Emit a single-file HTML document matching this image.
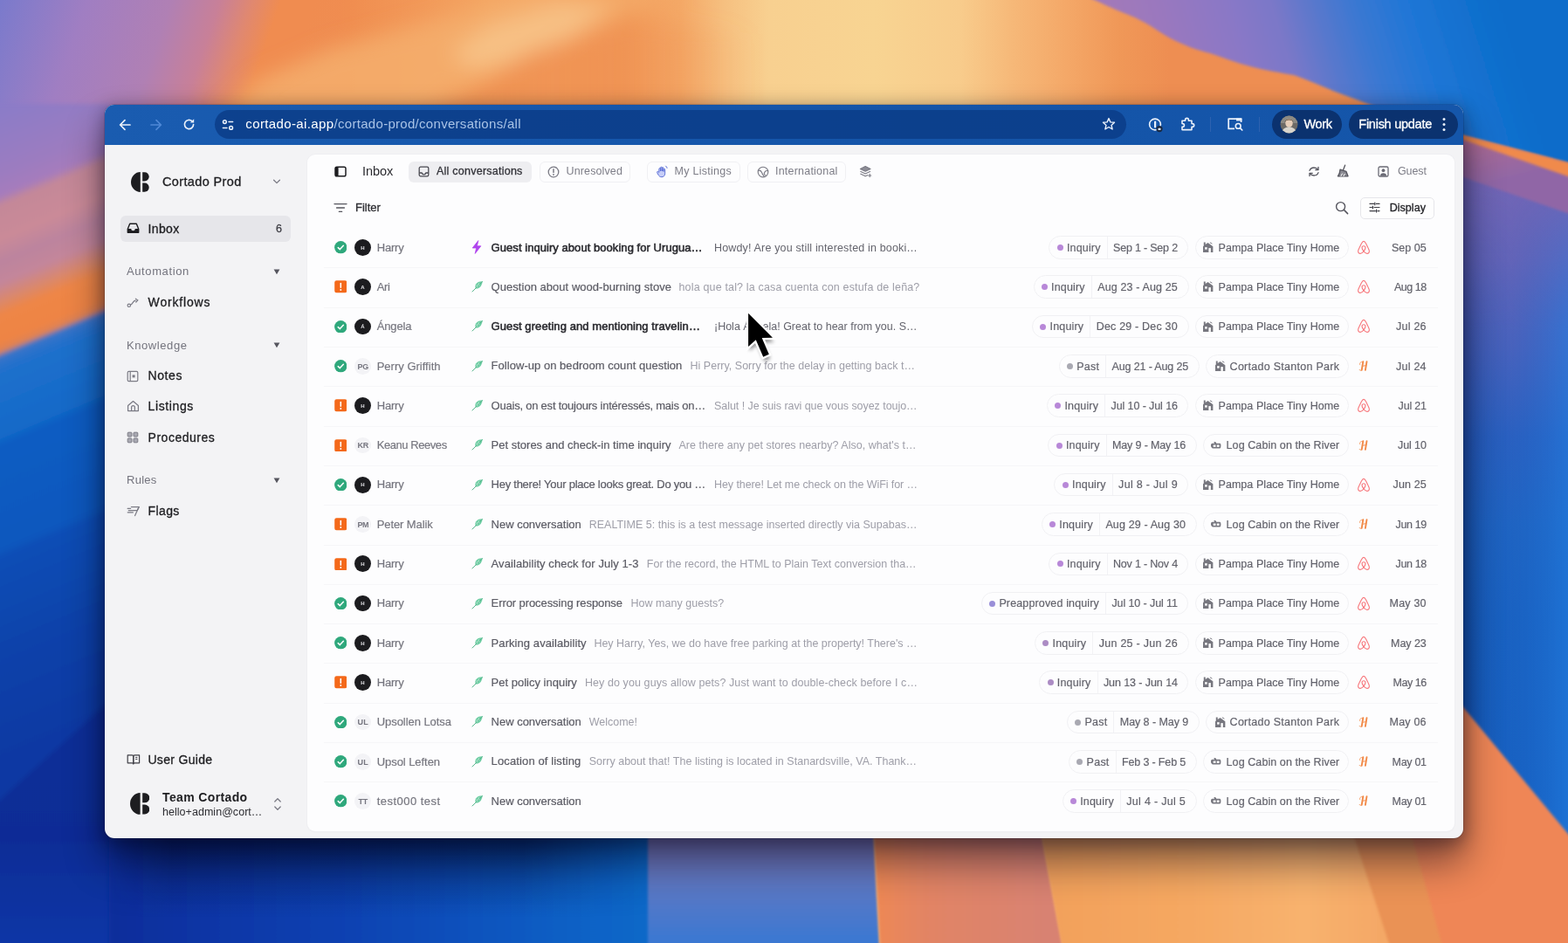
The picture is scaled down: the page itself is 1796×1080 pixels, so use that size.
<!DOCTYPE html>
<html lang="en"><head><meta charset="utf-8"><title>Cortado Inbox</title>
<style>
*{box-sizing:border-box;margin:0;padding:0}
html,body{width:1796px;height:1080px;overflow:hidden;background:#0a5cc0}
body{position:relative;font-family:"Liberation Sans",sans-serif;color:#18181b}
#bg{position:absolute;left:0;top:0}
#win{position:absolute;left:120px;top:120px;width:1556px;height:840px;border-radius:11px;background:#f3f3f5;box-shadow:0 26px 44px 2px rgba(0,0,20,.48),0 4px 18px 2px rgba(0,0,24,.30),0 0 0 1px rgba(0,0,30,.12)}
#tb{position:absolute;left:120px;top:120px;width:1556px;height:46px;border-radius:11px 11px 0 0;background:linear-gradient(90deg,#1a5cb0 0%,#1657ac 30%,#1454a8 60%,#1556aa 100%)}
#main{position:absolute;left:352px;top:176.5px;width:1314px;height:775px;background:#fdfdfe;border-radius:9px;box-shadow:0 0 0 1px #efeff2,0 1px 2px rgba(0,0,0,.04)}
#ui{position:absolute;left:0;top:0;width:1796px;height:1080px;will-change:transform}
.t{position:absolute;white-space:pre;line-height:20px;height:20px}
.m{-webkit-text-stroke:.3px currentColor}
.m2{-webkit-text-stroke:.18px currentColor}
.sb{-webkit-text-stroke:.55px currentColor}

</style></head>
<body>
<svg id="bg" width="1796" height="1080" viewBox="0 0 1796 1080">
<defs>
<linearGradient id="gTop" x1="0" y1="0" x2="1796" y2="0" gradientUnits="userSpaceOnUse">
<stop offset="0" stop-color="#7d7ccc"/>
<stop offset="0.033" stop-color="#8e7ec6"/>
<stop offset="0.067" stop-color="#a480be"/>
<stop offset="0.1" stop-color="#b880aa"/>
<stop offset="0.128" stop-color="#cc8490"/>
<stop offset="0.15" stop-color="#e2886c"/>
<stop offset="0.178" stop-color="#ef8b52"/>
<stop offset="0.223" stop-color="#f08e50"/>
<stop offset="0.267" stop-color="#f29858"/>
<stop offset="0.312" stop-color="#f4a562"/>
<stop offset="0.356" stop-color="#f5a462"/>
<stop offset="0.40" stop-color="#f29c5a"/>
<stop offset="0.434" stop-color="#f4a866"/>
<stop offset="0.462" stop-color="#f6c080"/>
<stop offset="0.49" stop-color="#f8d090"/>
<stop offset="0.557" stop-color="#f8d492"/>
<stop offset="0.612" stop-color="#f8cc8c"/>
<stop offset="0.646" stop-color="#f6b878"/>
<stop offset="0.68" stop-color="#f4a868"/>
<stop offset="0.713" stop-color="#f09858"/>
<stop offset="0.746" stop-color="#ee8e52"/>
<stop offset="1" stop-color="#ee8e52"/>
</linearGradient>
<linearGradient id="gSky" x1="1250" y1="80" x2="1700" y2="-60" gradientUnits="userSpaceOnUse">
<stop offset="0" stop-color="#a87ab4"/>
<stop offset="0.2" stop-color="#9a78be"/>
<stop offset="0.36" stop-color="#8a78c6"/>
<stop offset="0.47" stop-color="#7a78c8"/>
<stop offset="0.56" stop-color="#5a78cc"/>
<stop offset="0.66" stop-color="#3a78d2"/>
<stop offset="0.78" stop-color="#2076d6"/>
<stop offset="0.95" stop-color="#0e6ecc"/>
<stop offset="1" stop-color="#0a6cca"/>
</linearGradient>
<linearGradient id="gRight" x1="0" y1="150" x2="0" y2="1080" gradientUnits="userSpaceOnUse">
<stop offset="0" stop-color="#7c68b4"/>
<stop offset="0.055" stop-color="#7466b6"/>
<stop offset="0.16" stop-color="#6664b8"/>
<stop offset="0.27" stop-color="#4c62bc"/>
<stop offset="0.376" stop-color="#2c60c0"/>
<stop offset="0.484" stop-color="#2064c2"/>
<stop offset="0.6" stop-color="#1a62c2"/>
<stop offset="1" stop-color="#1660c2"/>
</linearGradient>
<linearGradient id="gRightH" x1="1676" y1="0" x2="1800" y2="0" gradientUnits="userSpaceOnUse">
<stop offset="0" stop-color="#0a3c98" stop-opacity=".22"/>
<stop offset="0.45" stop-color="#1a66c8" stop-opacity=".1"/>
<stop offset="1" stop-color="#2280e4" stop-opacity=".6"/>
</linearGradient>
<!-- diagonal band gradient for left strip: t=(y+0.42x)/1000 -->
<linearGradient id="gLeft" x1="0" y1="0" x2="357" y2="850" gradientUnits="userSpaceOnUse">
<stop offset="0" stop-color="#807ccc"/>
<stop offset="0.12" stop-color="#8a7cc8"/>
<stop offset="0.2" stop-color="#9c7cc0"/>
<stop offset="0.224" stop-color="#a67cbc"/>
<stop offset="0.236" stop-color="#c48898"/>
<stop offset="0.275" stop-color="#ca8a98"/>
<stop offset="0.30" stop-color="#bc849e"/>
<stop offset="0.325" stop-color="#c4869a"/>
<stop offset="0.347" stop-color="#dc8868"/>
<stop offset="0.362" stop-color="#ee8646"/>
<stop offset="0.392" stop-color="#ee8444"/>
<stop offset="0.403" stop-color="#dc8258"/>
<stop offset="0.409" stop-color="#3a74c8"/>
<stop offset="0.425" stop-color="#2070cc"/>
<stop offset="0.47" stop-color="#186cca"/>
<stop offset="0.5" stop-color="#146ac8"/>
<stop offset="0.512" stop-color="#0a5cc2"/>
<stop offset="0.628" stop-color="#0a58be"/>
<stop offset="0.64" stop-color="#0a4eb6"/>
<stop offset="0.75" stop-color="#0a42aa"/>
<stop offset="0.85" stop-color="#0a3aa4"/>
<stop offset="1" stop-color="#0a34a0"/>
</linearGradient>
<linearGradient id="gNavy" x1="0" y1="780" x2="0" y2="1080" gradientUnits="userSpaceOnUse">
<stop offset="0" stop-color="#0a3098"/>
<stop offset="0.6" stop-color="#0a2c96"/>
<stop offset="1" stop-color="#0a36a6"/>
</linearGradient>
<linearGradient id="gBot" x1="120" y1="0" x2="745" y2="0" gradientUnits="userSpaceOnUse">
<stop offset="0" stop-color="#0a2c9a"/>
<stop offset="0.2" stop-color="#0a36a6"/>
<stop offset="0.45" stop-color="#0a42b2"/>
<stop offset="0.7" stop-color="#0a54be"/>
<stop offset="0.88" stop-color="#0a62c6"/>
<stop offset="1" stop-color="#0868c8"/>
</linearGradient>
<linearGradient id="gB2" x1="0" y1="960" x2="0" y2="1080" gradientUnits="userSpaceOnUse">
<stop offset="0" stop-color="#7a76b6"/>
<stop offset="0.45" stop-color="#5c78c4"/>
<stop offset="1" stop-color="#3a78d2"/>
</linearGradient>
<linearGradient id="gB3" x1="1000" y1="0" x2="1200" y2="0" gradientUnits="userSpaceOnUse">
<stop offset="0" stop-color="#ee8854"/>
<stop offset="0.3" stop-color="#e28464"/>
<stop offset="1" stop-color="#d88272"/>
</linearGradient>
<linearGradient id="gB4" x1="1190" y1="0" x2="1580" y2="0" gradientUnits="userSpaceOnUse">
<stop offset="0" stop-color="#f2a05a"/>
<stop offset="0.45" stop-color="#f5a862"/>
<stop offset="0.78" stop-color="#f8b26e"/>
<stop offset="1" stop-color="#f4a866"/>
</linearGradient>
<linearGradient id="gDk" x1="505" y1="0" x2="860" y2="0" gradientUnits="userSpaceOnUse">
<stop offset="0" stop-color="#ee8c4e" stop-opacity=".75"/>
<stop offset="0.55" stop-color="#ee8c4e" stop-opacity=".6"/>
<stop offset="1" stop-color="#f2a060" stop-opacity="0"/>
</linearGradient>
<linearGradient id="gTL" x1="0" y1="0" x2="378" y2="130" gradientUnits="userSpaceOnUse">
<stop offset="0" stop-color="#7a7acc"/>
<stop offset="0.1" stop-color="#8a7cc8"/>
<stop offset="0.2375" stop-color="#a07ec2"/>
<stop offset="0.465" stop-color="#b080b4"/>
<stop offset="0.5975" stop-color="#c88098"/>
<stop offset="0.685" stop-color="#e08870"/>
<stop offset="0.7625" stop-color="#f08c50"/>
<stop offset="0.85" stop-color="#f08c50"/>
<stop offset="1" stop-color="#f08c50" stop-opacity="0"/>
</linearGradient>
<linearGradient id="gMR" x1="0" y1="200" x2="0" y2="380" gradientUnits="userSpaceOnUse"><stop offset="0" stop-color="#000"/><stop offset="1" stop-color="#fff"/></linearGradient>
<mask id="mR" maskUnits="userSpaceOnUse" x="1600" y="150" width="260" height="960"><rect x="1600" y="150" width="260" height="960" fill="url(#gMR)"/></mask>
<linearGradient id="gPink" x1="1676" y1="160" x2="1690" y2="215" gradientUnits="userSpaceOnUse"><stop offset="0" stop-color="#b06c92"/><stop offset="1" stop-color="#9066a6"/></linearGradient>
<linearGradient id="gBotS" x1="0" y1="958" x2="0" y2="1050" gradientUnits="userSpaceOnUse"><stop offset="0" stop-color="#04103c" stop-opacity=".55"/><stop offset="0.4" stop-color="#04103c" stop-opacity=".28"/><stop offset="1" stop-color="#04103c" stop-opacity="0"/></linearGradient>
<linearGradient id="gMBS" x1="120" y1="0" x2="760" y2="0" gradientUnits="userSpaceOnUse"><stop offset="0" stop-color="#000"/><stop offset="0.12" stop-color="#fff"/><stop offset="0.75" stop-color="#fff"/><stop offset="1" stop-color="#000"/></linearGradient>
<mask id="mBS" maskUnits="userSpaceOnUse" x="100" y="940" width="700" height="140"><rect x="100" y="940" width="700" height="140" fill="url(#gMBS)"/></mask>
<filter id="b6" x="-5%" y="-5%" width="110%" height="110%"><feGaussianBlur stdDeviation="2.5"/></filter>
<filter id="b3" x="-5%" y="-5%" width="110%" height="110%"><feGaussianBlur stdDeviation="1.6"/></filter>
<filter id="b12" x="-5%" y="-5%" width="110%" height="110%"><feGaussianBlur stdDeviation="12"/></filter>
</defs>
<rect width="1796" height="1080" fill="url(#gTop)"/>
<rect x="0" y="0" width="520" height="135" fill="url(#gTL)"/>
<!-- diagonal lighter band top-left -->
<g filter="url(#b12)">
<polygon points="250,135 295,92 378,56 462,33 545,11 600,-12 780,-12 700,20 600,56 490,125 480,135" fill="#f5ae6c" opacity=".85"/>
<polygon points="517,60 560,30 640,5 700,10 660,40 590,72 540,80" fill="#f8c48a" opacity=".85"/>
<polygon points="500,135 600,62 720,22 860,40 860,135" fill="url(#gDk)"/>
</g>
<!-- sky above ridge -->
<path d="M1243,-5 C1270,8 1285,14 1300,20 C1320,30 1330,38 1339,43 C1356,52 1370,57 1386,61 C1402,66 1416,72 1432,76 C1450,81 1466,83 1482,86 C1500,92 1516,100 1532,106 C1580,124 1630,142 1676,156 L1830,196 L1830,-5 Z" fill="url(#gSky)" filter="url(#b3)"/>
<rect x="1620" y="-5" width="180" height="200" fill="#0a66c6" opacity=".0"/>
<!-- right strip below ridge -->
<polygon points="1600,131 1676,157 1830,197 1830,1080 1600,1080" fill="url(#gRight)"/>
<rect x="1640" y="180" width="190" height="910" fill="url(#gRightH)" mask="url(#mR)"/>
<polygon points="1600,130 1676,156 1830,196 1830,256 1676,203 1600,177" fill="url(#gPink)" filter="url(#b3)"/>
<polygon points="1600,129 1676,155 1830,195 1830,214 1676,160 1600,135" fill="#f08a4c" filter="url(#b3)"/>
<!-- bottom right orange -->
<polygon points="1600,715 1676,810 1830,996 1830,1090 1400,1090 1400,715" fill="#ef8656" filter="url(#b3)"/>
<!-- left strip -->
<g filter="url(#b6)">
<rect x="-10" y="119" width="136" height="980" fill="url(#gLeft)"/>
<polygon points="-10,925 130,798 300,640 300,1100 -10,1100" fill="url(#gNavy)"/>
</g>
<!-- bottom strip -->
<rect x="125" y="945" width="625" height="140" fill="url(#gBot)" filter="url(#b6)"/>
<rect x="120" y="950" width="640" height="110" fill="url(#gBotS)" mask="url(#mBS)"/>
<polygon points="742,940 1000,940 1008,1090 742,1090" fill="url(#gB2)" filter="url(#b3)"/>
<polygon points="1000,940 1190,940 1218,1090 1008,1090" fill="url(#gB3)" filter="url(#b3)"/>
<polygon points="1540,940 1612,940 1654,1090 1590,1090" fill="#ea9254" filter="url(#b3)"/>
<polygon points="1190,940 1545,940 1594,1090 1218,1090" fill="url(#gB4)" filter="url(#b3)"/>
</svg>

<div id="win"></div>
<div id="tb"></div>
<div id="main"></div>
<div id="ui">
<div style="position:absolute;left:246.0px;top:126.0px;width:1044.0px;height:33.0px;border-radius:17px;background:#0b3c86;opacity:.82"></div>
<svg style="position:absolute;left:135.5px;top:135.5px" width="14" height="14" viewBox="0 0 14 14" ><path d="M13 7H2.2M7 1.6L1.6 7L7 12.4" fill="none" stroke="#eaf1fb" stroke-width="1.7" stroke-linecap="round" stroke-linejoin="round"/></svg>
<svg style="position:absolute;left:172.0px;top:135.5px" width="14" height="14" viewBox="0 0 14 14" ><path d="M1 7H11.8M7 1.6L12.4 7L7 12.4" fill="none" stroke="#4f88d6" stroke-width="1.7" stroke-linecap="round" stroke-linejoin="round"/></svg>
<svg style="position:absolute;left:209.0px;top:135.0px" width="15" height="15" viewBox="0 0 15 15" ><path d="M12.6 7.5A5.1 5.1 0 1 1 10.9 3.7" fill="none" stroke="#eaf1fb" stroke-width="1.7" stroke-linecap="round"/><path d="M13.2 1.2V5.6H8.8Z" fill="#eaf1fb"/></svg>
<svg style="position:absolute;left:253.5px;top:135.5px" width="14" height="14" viewBox="0 0 14 14" ><g fill="none" stroke="#eaf1fb" stroke-width="1.5" stroke-linecap="round"><circle cx="3.4" cy="3.6" r="1.9"/><path d="M8 3.6H12.6"/><circle cx="10.6" cy="10.4" r="1.9"/><path d="M1.4 10.4H6"/></g></svg>
<span class="t" style="left:281.3px;top:132.3px;font-size:15px;letter-spacing:0.378px;color:#ffffff;">cortado-ai.app</span>
<span class="t" style="left:382.6px;top:132.3px;font-size:15px;letter-spacing:0.293px;color:#a9c3e6;">/cortado-prod/conversations/all</span>
<svg style="position:absolute;left:1262.0px;top:134.0px" width="16" height="16" viewBox="0 0 16 16" ><path d="M8 1.6L9.9 5.9L14.5 6.3L11 9.4L12.1 14L8 11.5L3.9 14L5 9.4L1.5 6.3L6.1 5.9Z" fill="none" stroke="#eaf1fb" stroke-width="1.4" stroke-linejoin="round"/></svg>
<svg style="position:absolute;left:1314.5px;top:133.5px" width="18" height="18" viewBox="0 0 18 18" ><circle cx="8" cy="8.5" r="6.4" fill="none" stroke="#eaf1fb" stroke-width="1.6"/><rect x="7" y="4.6" width="2.2" height="7.8" rx="1" fill="#eaf1fb"/><circle cx="13" cy="13.6" r="3.6" fill="#1a2a44"/><rect x="11.6" y="12.8" width="2.8" height="2.3" rx=".5" fill="#eaf1fb"/></svg>
<svg style="position:absolute;left:1351.0px;top:133.0px" width="18" height="18" viewBox="0 0 18 18" ><path d="M3 5.2H6.6V4.3A1.9 1.9 0 0 1 10.4 4.3V5.2H14V8.6H14.8A1.9 1.9 0 0 1 14.8 12.4H14V15.6H3V12.3H3.6A1.85 1.85 0 0 0 3.6 8.6H3Z" fill="none" stroke="#eaf1fb" stroke-width="1.6" stroke-linejoin="round"/></svg>
<div style="position:absolute;left:1386.0px;top:134.0px;width:1.0px;height:17.0px;background:#2d62b0"></div>
<svg style="position:absolute;left:1405.0px;top:133.0px" width="20" height="18" viewBox="0 0 20 18" ><path d="M9 14.4H2.2V3.2H16.6V7" fill="none" stroke="#eaf1fb" stroke-width="1.7" stroke-linejoin="round"/><rect x="11" y="2.4" width="6.4" height="3" fill="#eaf1fb"/><circle cx="13.2" cy="11.4" r="2.9" fill="none" stroke="#eaf1fb" stroke-width="1.6"/><path d="M15.4 13.6L17.8 16" stroke="#eaf1fb" stroke-width="1.7" stroke-linecap="round"/></svg>
<div style="position:absolute;left:1442.0px;top:134.0px;width:1.0px;height:17.0px;background:#2d62b0"></div>
<div style="position:absolute;left:1456.5px;top:126.0px;width:80.5px;height:32.5px;border-radius:17px;background:#0b326f"></div>
<svg style="position:absolute;left:1466.0px;top:132.0px" width="21" height="21" viewBox="0 0 21 21" ><defs><clipPath id="av"><circle cx="10.5" cy="10.5" r="10"/></clipPath></defs><g clip-path="url(#av)"><rect width="21" height="21" fill="#6d6a66"/><rect x="0" y="0" width="21" height="9" fill="#8c8a84"/><ellipse cx="10.5" cy="9" rx="4.2" ry="5" fill="#e6cdb8"/><path d="M5.6 9C5 3 16 3 15.4 9C15 6.5 13 5.4 10.5 5.6C8 5.4 6 6.5 5.6 9Z" fill="#5a4a3c"/><path d="M2 22C2 15 7 13.6 10.5 13.6S19 15 19 22Z" fill="#d8d4cc"/></g></svg>
<span class="t m" style="left:1493.6px;top:132.3px;font-size:14.5px;letter-spacing:-0.395px;color:#ffffff;">Work</span>
<div style="position:absolute;left:1544.5px;top:126.0px;width:125.0px;height:32.5px;border-radius:17px;background:#0b326f"></div>
<span class="t m" style="left:1556.3px;top:132.3px;font-size:14.5px;letter-spacing:-0.259px;color:#ffffff;">Finish update</span>
<svg style="position:absolute;left:1650.5px;top:134.0px" width="6" height="17" viewBox="0 0 6 17" ><circle cx="3" cy="2.4" r="1.5" fill="#eaf1fb"/><circle cx="3" cy="8.4" r="1.5" fill="#eaf1fb"/><circle cx="3" cy="14.4" r="1.5" fill="#eaf1fb"/></svg>
<svg style="position:absolute;left:150.1px;top:196.6px" width="20.8" height="23.0" viewBox="0 0 21 23.2" ><g fill="#1d1d20"><path d="M10.9 0A10.9 11.6 0 0 0 10.9 23.2Z"/><path d="M13.3 0.3H15.8A5.1 5.1 0 0 1 15.8 10.5H13.3Z"/><path d="M13.3 12.7H15.8A5.1 5.1 0 0 1 15.8 22.9H13.3Z"/></g></svg>
<span class="t m" style="left:186.0px;top:198.3px;font-size:14.5px;letter-spacing:0.363px;color:#1d1d20;">Cortado Prod</span>
<svg style="position:absolute;left:312.0px;top:204.0px" width="10" height="8" viewBox="0 0 10 8" ><path d="M1.6 2.2L5 5.6L8.4 2.2" fill="none" stroke="#7b7b85" stroke-width="1.3" stroke-linecap="round" stroke-linejoin="round"/></svg>
<div style="position:absolute;left:137.5px;top:246.5px;width:195.5px;height:30.0px;border-radius:6px;background:#e6e6ea"></div>
<svg style="position:absolute;left:145.0px;top:254.0px" width="15" height="14" viewBox="0 0 15 14" ><path d="M1.3 8.2L3.7 2.2H11.3L13.7 8.2V12.2H1.3Z" fill="none" stroke="#1d1d20" stroke-width="1.4" stroke-linejoin="round"/><path d="M1.3 8H5.2A2.3 2.3 0 0 0 9.8 8H13.7V12.3H1.3Z" fill="#1d1d20"/></svg>
<span class="t m" style="left:169.5px;top:251.6px;font-size:14px;letter-spacing:0.370px;color:#1d1d20;">Inbox</span>
<span class="t m" style="left:316.0px;top:251.6px;font-size:12.5px;color:#3f3f46;">6</span>
<span class="t" style="left:145.0px;top:301.0px;font-size:13px;letter-spacing:0.603px;color:#74747e;">Automation</span>
<svg style="position:absolute;left:313.0px;top:307.8px" width="8" height="7" viewBox="0 0 8 7" ><path d="M0.6 0.6H7.4L4 6.2Z" fill="#55555e"/></svg>
<svg style="position:absolute;left:145.0px;top:340.0px" width="15" height="13" viewBox="0 0 15 13" ><g fill="none" stroke="#7b7b85" stroke-width="1.2" stroke-linecap="round"><circle cx="2.8" cy="9.8" r="1.7"/><path d="M4.4 9.2C7 8.6 7 4.6 10.2 4.2"/><path d="M10.4 2.2L12.8 3.8L10.8 6"/></g></svg>
<span class="t m" style="left:169.6px;top:336.4px;font-size:14px;letter-spacing:0.832px;color:#1d1d20;">Workflows</span>
<span class="t" style="left:145.0px;top:385.5px;font-size:13px;letter-spacing:0.575px;color:#74747e;">Knowledge</span>
<svg style="position:absolute;left:313.0px;top:392.3px" width="8" height="7" viewBox="0 0 8 7" ><path d="M0.6 0.6H7.4L4 6.2Z" fill="#55555e"/></svg>
<svg style="position:absolute;left:145.0px;top:423.5px" width="14" height="14" viewBox="0 0 14 14" ><g fill="none" stroke="#7b7b85" stroke-width="1.2"><rect x="1.2" y="1.4" width="11.6" height="11.2" rx="1.4"/><path d="M4.2 1.4V12.6"/><rect x="6.6" y="5.4" width="3" height="3" fill="#7b7b85" stroke="none"/></g></svg>
<span class="t m" style="left:169.6px;top:420.3px;font-size:14px;letter-spacing:0.564px;color:#1d1d20;">Notes</span>
<svg style="position:absolute;left:145.0px;top:458.0px" width="15" height="14" viewBox="0 0 15 14" ><g fill="none" stroke="#7b7b85" stroke-width="1.25" stroke-linejoin="round"><path d="M1.6 6.6L7.5 1.6L13.4 6.6V12.6H1.6Z"/><path d="M5.6 12.6V8.6A1.9 1.9 0 0 1 9.4 8.6V12.6"/></g></svg>
<span class="t m" style="left:169.6px;top:455.4px;font-size:14px;letter-spacing:0.616px;color:#1d1d20;">Listings</span>
<svg style="position:absolute;left:145.0px;top:494.0px" width="14" height="14" viewBox="0 0 14 14" ><g fill="#a9a9b2" stroke="#7b7b85" stroke-width="1"><rect x="1.2" y="1.2" width="4.8" height="4.8" rx=".8"/><rect x="8" y="1.2" width="4.8" height="4.8" rx=".8"/><rect x="1.2" y="8" width="4.8" height="4.8" rx=".8"/><rect x="8" y="8" width="4.8" height="4.8" rx=".8"/></g></svg>
<span class="t m" style="left:169.6px;top:490.6px;font-size:14px;letter-spacing:0.511px;color:#1d1d20;">Procedures</span>
<span class="t" style="left:145.0px;top:540.0px;font-size:13px;letter-spacing:0.270px;color:#74747e;">Rules</span>
<svg style="position:absolute;left:313.0px;top:546.8px" width="8" height="7" viewBox="0 0 8 7" ><path d="M0.6 0.6H7.4L4 6.2Z" fill="#55555e"/></svg>
<svg style="position:absolute;left:144.5px;top:578.0px" width="16" height="14" viewBox="0 0 16 14" ><g fill="none" stroke="#7b7b85" stroke-width="1.2" stroke-linecap="round" stroke-linejoin="round"><path d="M5.4 2.6H14.4L12.2 6.6H4.4"/><path d="M13.2 4.4L9.6 12.6"/><path d="M1.2 4.4H4.6M2.2 6.6H4.4M1.2 8.8H7.4"/></g></svg>
<span class="t m" style="left:169.6px;top:574.8px;font-size:14px;letter-spacing:0.373px;color:#1d1d20;">Flags</span>
<svg style="position:absolute;left:145.0px;top:862.5px" width="16" height="14" viewBox="0 0 16 14" ><g fill="none" stroke="#3f3f46" stroke-width="1.2" stroke-linejoin="round"><path d="M1.2 1.8H6.2Q7.8 1.8 7.8 3.4V11.8Q7.8 10.8 6.2 10.8H1.2Z"/><path d="M14.6 1.8H9.4Q7.8 1.8 7.8 3.4V11.8Q7.8 10.8 9.4 10.8H14.6Z"/><path d="M10.2 4.4H12.4M10.2 6.4H12.4" stroke-width="1"/></g></svg>
<span class="t m" style="left:169.4px;top:859.5px;font-size:14px;letter-spacing:0.319px;color:#1d1d20;">User Guide</span>
<svg style="position:absolute;left:148.7px;top:907.8px" width="22.4" height="24.8" viewBox="0 0 21 23.2" ><g fill="#1d1d20"><path d="M10.9 0A10.9 11.6 0 0 0 10.9 23.2Z"/><path d="M13.3 0.3H15.8A5.1 5.1 0 0 1 15.8 10.5H13.3Z"/><path d="M13.3 12.7H15.8A5.1 5.1 0 0 1 15.8 22.9H13.3Z"/></g></svg>
<span class="t" style="left:186.0px;top:902.6px;font-size:14px;letter-spacing:0.367px;font-weight:700;color:#1d1d20;">Team Cortado</span>
<span class="t" style="left:186.0px;top:919.8px;font-size:12.5px;letter-spacing:0.035px;color:#2c2c31;">hello+admin@cort…</span>
<svg style="position:absolute;left:312.5px;top:912.5px" width="10" height="16" viewBox="0 0 10 16" ><path d="M1.8 5L5 1.8L8.2 5M1.8 11L5 14.2L8.2 11" fill="none" stroke="#7b7b85" stroke-width="1.3" stroke-linecap="round" stroke-linejoin="round"/></svg>
<svg style="position:absolute;left:383.0px;top:189.5px" width="14" height="13" viewBox="0 0 14 13" ><rect x="1" y="1.2" width="12" height="10.6" rx="1.8" fill="none" stroke="#1d1d20" stroke-width="1.5"/><rect x="1" y="1.2" width="3.6" height="10.6" fill="#1d1d20"/></svg>
<span class="t" style="left:415.0px;top:186.4px;font-size:14.5px;letter-spacing:-0.037px;color:#2b2b30;">Inbox</span>
<div style="position:absolute;left:468.3px;top:185.0px;width:140.3px;height:24.0px;border-radius:6px;background:#eeeef1"></div>
<svg style="position:absolute;left:478.5px;top:190.0px" width="13" height="13" viewBox="0 0 13 13" ><g fill="none" stroke="#4a4a52" stroke-width="1.3" stroke-linejoin="round"><rect x="1.2" y="1.2" width="10.6" height="10.6" rx="1.6"/><path d="M1.2 8H4.2Q4.6 9.8 6.5 9.8T8.8 8H11.8"/></g></svg>
<span class="t m" style="left:500.0px;top:186.4px;font-size:12.5px;letter-spacing:0.241px;color:#34343a;">All conversations</span>
<div style="position:absolute;left:617.6px;top:185.0px;width:104.0px;height:24.0px;border-radius:6px;border:1px solid #f0f0f3"></div>
<svg style="position:absolute;left:626.5px;top:189.5px" width="14" height="14" viewBox="0 0 14 14" ><circle cx="7" cy="7" r="5.8" fill="none" stroke="#7b7b85" stroke-width="1.3"/><path d="M7 3.8V7.6" stroke="#7b7b85" stroke-width="1.5" stroke-linecap="round"/><circle cx="7" cy="10" r=".9" fill="#7b7b85"/></svg>
<span class="t" style="left:648.6px;top:186.4px;font-size:12.5px;letter-spacing:0.117px;color:#7d7d87;">Unresolved</span>
<div style="position:absolute;left:741.0px;top:185.0px;width:107.0px;height:24.0px;border-radius:6px;border:1px solid #f0f0f3"></div>
<svg style="position:absolute;left:750.5px;top:189.0px" width="14" height="15" viewBox="0 0 14 15" ><g fill="#c6cdf7" stroke="#5b6fd6" stroke-width="1" stroke-linejoin="round" stroke-linecap="round"><path d="M3.9 8V4.4a.85.85 0 0 1 1.7 0V7V3.1a.85.85 0 0 1 1.7 0V7V3.5a.85.85 0 0 1 1.7 0V7.4V5.3a.85.85 0 0 1 1.7 0V9.8c0 2.4-1.6 3.9-3.8 3.9-1.9 0-2.9-.8-3.8-2.4L1.7 8.7a.85.85 0 0 1 1.4-1Z"/><path d="M11.6 1.1q1.3.9 1.5 2.3" fill="none"/></g></svg>
<span class="t" style="left:772.6px;top:186.4px;font-size:12.5px;letter-spacing:0.261px;color:#7d7d87;">My Listings</span>
<div style="position:absolute;left:856.3px;top:185.0px;width:112.3px;height:24.0px;border-radius:6px;border:1px solid #f0f0f3"></div>
<svg style="position:absolute;left:866.6px;top:189.5px" width="14" height="14" viewBox="0 0 14 14" ><g fill="none" stroke="#7b7b85" stroke-width="1.15" stroke-linecap="round"><circle cx="7" cy="7" r="5.8"/><path d="M1.6 5.2Q4.6 5 5.4 7.2T8.4 12.4M12.6 5.6Q9.8 5 8.6 7.4T10.6 11.4"/></g></svg>
<span class="t" style="left:888.0px;top:186.4px;font-size:12.5px;letter-spacing:0.214px;color:#7d7d87;">International</span>
<svg style="position:absolute;left:984.0px;top:188.5px" width="15" height="15" viewBox="0 0 15 15" ><g stroke="#7b7b85" stroke-width="1.1" stroke-linejoin="round"><path d="M7.2 1.6L13 4.4L7.2 7.2L1.4 4.4Z" fill="#8d8d96"/><path d="M1.4 7.2L7.2 10L13 7.2" fill="none"/><path d="M1.4 10L7.2 12.8L10 11.4" fill="none"/><path d="M12.2 10.4V13.6M10.6 12H13.8" fill="none" stroke-linecap="round"/></g></svg>
<svg style="position:absolute;left:1498.0px;top:189.5px" width="14" height="13" viewBox="0 0 14 13" ><g fill="none" stroke="#55555e" stroke-width="1.3" stroke-linecap="round" stroke-linejoin="round"><path d="M2 5.4Q3.2 2 7 2Q10 2 11.6 4.4"/><path d="M12 1.4V4.6H8.8"/><path d="M12 7.6Q10.8 11 7 11Q4 11 2.4 8.6"/><path d="M2 11.6V8.4H5.2"/></g></svg>
<svg style="position:absolute;left:1531.0px;top:188.0px" width="14" height="15" viewBox="0 0 14 15" ><g fill="none" stroke="#55555e" stroke-width="1.3" stroke-linecap="round" stroke-linejoin="round"><path d="M9.6 1.2L7.6 6.6"/><path d="M4 6.2L11 8.4L13 13.8H1.4Q3.8 10.6 4 6.2Z" fill="#8a8a92"/><path d="M5 13.6L6.4 11M8 13.6L9.2 11.4" stroke="#fdfdfd" stroke-width="1"/></g></svg>
<svg style="position:absolute;left:1577.5px;top:189.5px" width="13" height="13" viewBox="0 0 13 13" ><rect x="1" y="1" width="11" height="11" rx="1.6" fill="none" stroke="#6a6a74" stroke-width="1.3"/><circle cx="6.5" cy="5.2" r="1.9" fill="#6a6a74"/><path d="M2.8 11.4Q3.2 8.2 6.5 8.2T10.2 11.4Z" fill="#6a6a74"/></svg>
<span class="t" style="left:1600.9px;top:186.4px;font-size:12.5px;letter-spacing:-0.092px;color:#7d7d87;">Guest</span>
<svg style="position:absolute;left:382.0px;top:231.5px" width="16" height="12" viewBox="0 0 16 12" ><path d="M1 1.6H15M3.6 6H12.4M6.4 10.4H9.6" stroke="#55555e" stroke-width="1.4" stroke-linecap="round"/></svg>
<span class="t m" style="left:407.0px;top:227.6px;font-size:13px;letter-spacing:-0.015px;color:#2e2e33;">Filter</span>
<svg style="position:absolute;left:1528.5px;top:230.0px" width="16" height="16" viewBox="0 0 16 16" ><circle cx="6.6" cy="6.6" r="5" fill="none" stroke="#55555e" stroke-width="1.4"/><path d="M10.4 10.4L14.6 14.6" stroke="#55555e" stroke-width="1.5" stroke-linecap="round"/></svg>
<div style="position:absolute;left:1557.5px;top:225.5px;width:85.0px;height:25.0px;border-radius:5px;border:1px solid #e6e6ea;background:#fefefe"></div>
<svg style="position:absolute;left:1568.0px;top:231.0px" width="13" height="13" viewBox="0 0 13 13" ><g stroke="#3f3f46" stroke-width="1.2" stroke-linecap="round"><path d="M1 2.4H6M8.4 2.4H12M1 6.5H3.4M6 6.5H12M1 10.6H7.4M10 10.6H12"/><path d="M6.8 1V3.8M4.4 5.1V7.9M8.6 9.2V12"/></g></svg>
<span class="t m" style="left:1591.7px;top:227.8px;font-size:12.5px;letter-spacing:0.043px;color:#232327;">Display</span>
<svg width="0" height="0" style="position:absolute"><defs>
<symbol id="i-ok" viewBox="0 0 14 14"><circle cx="7" cy="7" r="6.9" fill="#2fa87c"/><path d="M4.1 7.3L6.1 9.2L9.9 5.1" fill="none" stroke="#fff" stroke-width="1.5" stroke-linecap="round" stroke-linejoin="round"/></symbol>
<symbol id="i-al" viewBox="0 0 14 14"><rect x=".2" y=".2" width="13.6" height="13.6" rx="2.2" fill="#f4691a"/><path d="M7 3.4V8" stroke="#fff" stroke-width="1.5" stroke-linecap="round"/><circle cx="7" cy="10.5" r=".9" fill="#fff"/></symbol>
<symbol id="i-bolt" viewBox="0 0 12 16"><path d="M7.8 .6L1.2 9H5.6L4.2 15.4L10.8 6.8H6.4Z" fill="#b044ee" stroke="#b044ee" stroke-width=".8" stroke-linejoin="round"/></symbol>
<symbol id="i-fea" viewBox="0 0 14 14"><path d="M12.8 1.2Q7 1 5 4.6Q3.8 7 4.6 9.6L7 9.4Q11.6 8.4 12.8 1.2Z" fill="#58c696"/><path d="M12.4 1.6L4.8 9.2M4.8 9.2L1 13" fill="none" stroke="#3aa87a" stroke-width="1" stroke-linecap="round"/><path d="M8.4 3.2V6.2M6.6 5V8" stroke="#c9efdd" stroke-width=".7"/></symbol>
<symbol id="i-home" viewBox="0 0 13 13"><path d="M1.6 .6H3.6V3L6.5 1L12.6 5.4V12.4H.8V5.4L1.6 4.8Z" fill="#77777f"/><rect x="3" y="6.4" width="2.6" height="2.6" fill="#fdfdfd"/><rect x="7.4" y="7.4" width="2.6" height="5" fill="#fdfdfd"/><path d="M9 .8L11.6 2.2" stroke="#77777f" stroke-width="1"/></symbol>
<symbol id="i-cab" viewBox="0 0 14 12"><path d="M3 3.4Q1 3.4 1 6T3 9.6H12Q13.4 9.6 13.4 6.4T12 3.4H8L6.6 1.4H4.6L5.6 3.4Z" fill="#77777f"/><rect x="4" y="5.2" width="3" height="2.6" fill="#fdfdfd"/><rect x="8.4" y="5.2" width="3" height="2.6" fill="#fdfdfd"/></symbol>
<symbol id="i-abnb" viewBox="0 0 16 17"><path d="M8 1.4C9.2 1.4 9.8 2.4 10.6 4C11.8 6.4 13.6 9.8 14.2 11.6C14.9 13.8 13.6 15.4 11.8 15.4C10.2 15.4 9 14.2 8 12.8C7 14.2 5.8 15.4 4.2 15.4C2.4 15.4 1.1 13.8 1.8 11.6C2.4 9.8 4.2 6.4 5.4 4C6.2 2.4 6.8 1.4 8 1.4Z" fill="none" stroke="#f7757a" stroke-width="1.1"/><path d="M8 12.8C6.6 11 6 9.8 6 8.8A2 2 0 0 1 10 8.8C10 9.8 9.4 11 8 12.8Z" fill="none" stroke="#f7757a" stroke-width="1.1"/></symbol>
<symbol id="i-hou" viewBox="0 0 12 12"><g fill="none" stroke="#f28a48" stroke-linecap="round"><path d="M5.3 1.2L3.7 10.8" stroke-width="1.9"/><path d="M9.5 1.2L7.9 10.8" stroke-width="1.9"/><path d="M4.4 6.3L8.8 5.6" stroke-width=".9"/><path d="M4.9 1.5C2.4 .9 .7 3.2 1.7 4.8" stroke-width=".8"/><path d="M3.7 10.8C2.9 11.9 1.5 11.4 1.1 10.4" stroke-width=".8"/></g></symbol>
</defs></svg>
<svg style="position:absolute;left:382.7px;top:276.1px" width="14.6" height="14.6"><use href="#i-ok"/></svg>
<div style="position:absolute;left:406.4px;top:274.0px;width:18.8px;height:18.8px;border-radius:50%;background:#1c1c1f"></div>
<span class="t" style="left:413.2px;top:273.6px;font-size:6px;font-weight:700;color:#e8e8ec;">H</span>
<span class="t m2" style="left:431.7px;top:273.6px;font-size:13px;letter-spacing:-0.176px;color:#76767f;">Harry</span>
<svg style="position:absolute;left:540.2px;top:275.4px" width="12" height="16"><use href="#i-bolt"/></svg>
<span class="t sb" style="left:562.6px;top:273.5px;font-size:13px;letter-spacing:0.053px;color:#2a2a2f;">Guest inquiry about booking for Urugua…</span>
<span class="t" style="left:818.0px;top:273.5px;font-size:12.5px;letter-spacing:0.159px;color:#64646d;">Howdy! Are you still interested in booki…</span>
<div style="position:absolute;left:1368.8px;top:270.1px;width:176.6px;height:26.6px;border-radius:14px;border:1px solid #f0f0f3"></div>
<svg style="position:absolute;left:1377.0px;top:277.0px" width="13" height="12.5"><use href="#i-home"/></svg>
<span class="t m2" style="left:1395.5px;top:273.6px;font-size:12.5px;letter-spacing:0.054px;color:#62626b;">Pampa Place Tiny Home</span>
<div style="position:absolute;left:1201.3px;top:270.1px;width:160.2px;height:26.6px;border-radius:14px;border:1px solid #f0f0f3"></div>
<div style="position:absolute;left:1210.6px;top:280.0px;width:7.0px;height:7.0px;border-radius:50%;background:#b888d8"></div>
<span class="t m2" style="left:1221.9px;top:273.6px;font-size:12.5px;letter-spacing:0.167px;color:#62626b;">Inquiry</span>
<div style="position:absolute;left:1267.6px;top:271.1px;width:1.0px;height:24.6px;background:#f2f2f5"></div>
<span class="t m2" style="left:1275.0px;top:273.6px;font-size:12.5px;letter-spacing:-0.196px;color:#62626b;">Sep 1 - Sep 2</span>
<svg style="position:absolute;left:1554.2px;top:274.8px" width="16" height="17"><use href="#i-abnb"/></svg>
<span class="t m2" style="left:1593.9px;top:273.6px;font-size:12.5px;letter-spacing:0.046px;color:#62626b;">Sep 05</span>
<div style="position:absolute;left:371.0px;top:306.4px;width:1276.0px;height:1.0px;background:#f6f6f8"></div>
<svg style="position:absolute;left:382.7px;top:321.4px" width="14.6" height="14.6"><use href="#i-al"/></svg>
<div style="position:absolute;left:406.4px;top:319.3px;width:18.8px;height:18.8px;border-radius:50%;background:#1c1c1f"></div>
<span class="t" style="left:413.2px;top:318.9px;font-size:6px;font-weight:700;color:#e8e8ec;">A</span>
<span class="t m2" style="left:431.7px;top:318.9px;font-size:13px;letter-spacing:-0.330px;color:#76767f;">Ari</span>
<svg style="position:absolute;left:539.8px;top:321.1px;opacity:.85" width="14" height="14"><use href="#i-fea"/></svg>
<span class="t m2" style="left:562.6px;top:318.8px;font-size:13px;letter-spacing:0.035px;color:#5a5a63;">Question about wood-burning stove</span>
<span class="t" style="left:777.5px;top:318.8px;font-size:12.5px;letter-spacing:0.161px;color:#9e9ea8;">hola que tal? la casa cuenta con estufa de leña?</span>
<div style="position:absolute;left:1368.8px;top:315.4px;width:176.6px;height:26.6px;border-radius:14px;border:1px solid #f0f0f3"></div>
<svg style="position:absolute;left:1377.0px;top:322.3px" width="13" height="12.5"><use href="#i-home"/></svg>
<span class="t m2" style="left:1395.5px;top:318.9px;font-size:12.5px;letter-spacing:0.054px;color:#62626b;">Pampa Place Tiny Home</span>
<div style="position:absolute;left:1183.5px;top:315.4px;width:178.0px;height:26.6px;border-radius:14px;border:1px solid #f0f0f3"></div>
<div style="position:absolute;left:1192.8px;top:325.3px;width:7.0px;height:7.0px;border-radius:50%;background:#b888d8"></div>
<span class="t m2" style="left:1204.1px;top:318.9px;font-size:12.5px;letter-spacing:0.167px;color:#62626b;">Inquiry</span>
<div style="position:absolute;left:1249.8px;top:316.4px;width:1.0px;height:24.6px;background:#f2f2f5"></div>
<span class="t m2" style="left:1257.2px;top:318.9px;font-size:12.5px;letter-spacing:0.136px;color:#62626b;">Aug 23 - Aug 25</span>
<svg style="position:absolute;left:1554.2px;top:320.1px" width="16" height="17"><use href="#i-abnb"/></svg>
<span class="t m2" style="left:1597.0px;top:318.9px;font-size:12.5px;letter-spacing:-0.471px;color:#62626b;">Aug 18</span>
<div style="position:absolute;left:371.0px;top:351.7px;width:1276.0px;height:1.0px;background:#f6f6f8"></div>
<svg style="position:absolute;left:382.7px;top:366.7px" width="14.6" height="14.6"><use href="#i-ok"/></svg>
<div style="position:absolute;left:406.4px;top:364.6px;width:18.8px;height:18.8px;border-radius:50%;background:#1c1c1f"></div>
<span class="t" style="left:413.2px;top:364.2px;font-size:6px;font-weight:700;color:#e8e8ec;">Á</span>
<span class="t m2" style="left:431.7px;top:364.2px;font-size:13px;letter-spacing:-0.114px;color:#76767f;">Ángela</span>
<svg style="position:absolute;left:539.8px;top:366.4px;opacity:.85" width="14" height="14"><use href="#i-fea"/></svg>
<span class="t sb" style="left:562.6px;top:364.1px;font-size:13px;letter-spacing:0.079px;color:#2a2a2f;">Guest greeting and mentioning travelin…</span>
<span class="t" style="left:818.0px;top:364.1px;font-size:12.5px;letter-spacing:-0.006px;color:#64646d;">¡Hola Ángela! Great to hear from you. S…</span>
<div style="position:absolute;left:1368.8px;top:360.7px;width:176.6px;height:26.6px;border-radius:14px;border:1px solid #f0f0f3"></div>
<svg style="position:absolute;left:1377.0px;top:367.6px" width="13" height="12.5"><use href="#i-home"/></svg>
<span class="t m2" style="left:1395.5px;top:364.2px;font-size:12.5px;letter-spacing:0.054px;color:#62626b;">Pampa Place Tiny Home</span>
<div style="position:absolute;left:1182.0px;top:360.7px;width:179.5px;height:26.6px;border-radius:14px;border:1px solid #f0f0f3"></div>
<div style="position:absolute;left:1191.3px;top:370.6px;width:7.0px;height:7.0px;border-radius:50%;background:#b888d8"></div>
<span class="t m2" style="left:1202.6px;top:364.2px;font-size:12.5px;letter-spacing:0.167px;color:#62626b;">Inquiry</span>
<div style="position:absolute;left:1248.3px;top:361.7px;width:1.0px;height:24.6px;background:#f2f2f5"></div>
<span class="t m2" style="left:1255.7px;top:364.2px;font-size:12.5px;letter-spacing:0.191px;color:#62626b;">Dec 29 - Dec 30</span>
<svg style="position:absolute;left:1554.2px;top:365.4px" width="16" height="17"><use href="#i-abnb"/></svg>
<span class="t m2" style="left:1599.0px;top:364.2px;font-size:12.5px;letter-spacing:0.240px;color:#62626b;">Jul 26</span>
<div style="position:absolute;left:371.0px;top:397.0px;width:1276.0px;height:1.0px;background:#f6f6f8"></div>
<svg style="position:absolute;left:382.7px;top:412.0px" width="14.6" height="14.6"><use href="#i-ok"/></svg>
<div style="position:absolute;left:406.4px;top:409.9px;width:18.8px;height:18.8px;border-radius:50%;background:#f3f3f6"></div>
<span class="t" style="left:409.6px;top:409.6px;font-size:9px;letter-spacing:-0.258px;font-weight:700;color:#74747e;">PG</span>
<span class="t m2" style="left:431.7px;top:409.5px;font-size:13px;letter-spacing:0.006px;color:#76767f;">Perry Griffith</span>
<svg style="position:absolute;left:539.8px;top:411.7px;opacity:.85" width="14" height="14"><use href="#i-fea"/></svg>
<span class="t m2" style="left:562.6px;top:409.4px;font-size:13px;letter-spacing:0.036px;color:#5a5a63;">Follow-up on bedroom count question</span>
<span class="t" style="left:790.5px;top:409.4px;font-size:12.5px;letter-spacing:0.014px;color:#9e9ea8;">Hi Perry, Sorry for the delay in getting back t…</span>
<div style="position:absolute;left:1381.0px;top:406.0px;width:164.4px;height:26.6px;border-radius:14px;border:1px solid #f0f0f3"></div>
<svg style="position:absolute;left:1391.0px;top:412.9px" width="13" height="12.5"><use href="#i-home"/></svg>
<span class="t m2" style="left:1408.6px;top:409.5px;font-size:12.5px;letter-spacing:0.269px;color:#62626b;">Cortado Stanton Park</span>
<div style="position:absolute;left:1212.6px;top:406.0px;width:161.1px;height:26.6px;border-radius:14px;border:1px solid #f0f0f3"></div>
<div style="position:absolute;left:1221.9px;top:415.9px;width:7.0px;height:7.0px;border-radius:50%;background:#a9a9b2"></div>
<span class="t m2" style="left:1233.2px;top:409.5px;font-size:12.5px;letter-spacing:0.246px;color:#62626b;">Past</span>
<div style="position:absolute;left:1266.2px;top:407.0px;width:1.0px;height:24.6px;background:#f2f2f5"></div>
<span class="t m2" style="left:1273.6px;top:409.5px;font-size:12.5px;letter-spacing:-0.144px;color:#62626b;">Aug 21 - Aug 25</span>
<svg style="position:absolute;left:1556.0px;top:413.1px" width="12" height="12"><use href="#i-hou"/></svg>
<span class="t m2" style="left:1599.0px;top:409.5px;font-size:12.5px;letter-spacing:0.240px;color:#62626b;">Jul 24</span>
<div style="position:absolute;left:371.0px;top:442.3px;width:1276.0px;height:1.0px;background:#f6f6f8"></div>
<svg style="position:absolute;left:382.7px;top:457.3px" width="14.6" height="14.6"><use href="#i-al"/></svg>
<div style="position:absolute;left:406.4px;top:455.2px;width:18.8px;height:18.8px;border-radius:50%;background:#1c1c1f"></div>
<span class="t" style="left:413.2px;top:454.8px;font-size:6px;font-weight:700;color:#e8e8ec;">H</span>
<span class="t m2" style="left:431.7px;top:454.8px;font-size:13px;letter-spacing:-0.176px;color:#76767f;">Harry</span>
<svg style="position:absolute;left:539.8px;top:457.0px;opacity:.85" width="14" height="14"><use href="#i-fea"/></svg>
<span class="t m2" style="left:562.6px;top:454.7px;font-size:13px;letter-spacing:-0.225px;color:#5a5a63;">Ouais, on est toujours intéressés, mais on…</span>
<span class="t" style="left:818.0px;top:454.7px;font-size:12.5px;letter-spacing:-0.056px;color:#9e9ea8;">Salut ! Je suis ravi que vous soyez toujo…</span>
<div style="position:absolute;left:1368.8px;top:451.3px;width:176.6px;height:26.6px;border-radius:14px;border:1px solid #f0f0f3"></div>
<svg style="position:absolute;left:1377.0px;top:458.2px" width="13" height="12.5"><use href="#i-home"/></svg>
<span class="t m2" style="left:1395.5px;top:454.8px;font-size:12.5px;letter-spacing:0.054px;color:#62626b;">Pampa Place Tiny Home</span>
<div style="position:absolute;left:1198.8px;top:451.3px;width:162.7px;height:26.6px;border-radius:14px;border:1px solid #f0f0f3"></div>
<div style="position:absolute;left:1208.1px;top:461.2px;width:7.0px;height:7.0px;border-radius:50%;background:#b888d8"></div>
<span class="t m2" style="left:1219.4px;top:454.8px;font-size:12.5px;letter-spacing:0.167px;color:#62626b;">Inquiry</span>
<div style="position:absolute;left:1265.1px;top:452.3px;width:1.0px;height:24.6px;background:#f2f2f5"></div>
<span class="t m2" style="left:1272.5px;top:454.8px;font-size:12.5px;letter-spacing:-0.095px;color:#62626b;">Jul 10 - Jul 16</span>
<svg style="position:absolute;left:1554.2px;top:456.0px" width="16" height="17"><use href="#i-abnb"/></svg>
<span class="t m2" style="left:1601.6px;top:454.8px;font-size:12.5px;letter-spacing:-0.193px;color:#62626b;">Jul 21</span>
<div style="position:absolute;left:371.0px;top:487.6px;width:1276.0px;height:1.0px;background:#f6f6f8"></div>
<svg style="position:absolute;left:382.7px;top:502.6px" width="14.6" height="14.6"><use href="#i-al"/></svg>
<div style="position:absolute;left:406.4px;top:500.5px;width:18.8px;height:18.8px;border-radius:50%;background:#f3f3f6"></div>
<span class="t" style="left:409.6px;top:500.2px;font-size:9px;letter-spacing:-0.250px;font-weight:700;color:#74747e;">KR</span>
<span class="t m2" style="left:431.7px;top:500.1px;font-size:13px;letter-spacing:-0.440px;color:#76767f;">Keanu Reeves</span>
<svg style="position:absolute;left:539.8px;top:502.3px;opacity:.85" width="14" height="14"><use href="#i-fea"/></svg>
<span class="t m2" style="left:562.6px;top:500.0px;font-size:13px;color:#5a5a63;">Pet stores and check-in time inquiry</span>
<span class="t" style="left:777.5px;top:500.0px;font-size:12.5px;letter-spacing:0.031px;color:#9e9ea8;">Are there any pet stores nearby? Also, what's t…</span>
<div style="position:absolute;left:1378.0px;top:496.6px;width:167.4px;height:26.6px;border-radius:14px;border:1px solid #f0f0f3"></div>
<svg style="position:absolute;left:1386.0px;top:503.5px" width="13" height="12.5"><use href="#i-cab"/></svg>
<span class="t m2" style="left:1404.6px;top:500.1px;font-size:12.5px;letter-spacing:0.079px;color:#62626b;">Log Cabin on the River</span>
<div style="position:absolute;left:1200.3px;top:496.6px;width:170.4px;height:26.6px;border-radius:14px;border:1px solid #f0f0f3"></div>
<div style="position:absolute;left:1209.6px;top:506.5px;width:7.0px;height:7.0px;border-radius:50%;background:#b888d8"></div>
<span class="t m2" style="left:1220.9px;top:500.1px;font-size:12.5px;letter-spacing:0.167px;color:#62626b;">Inquiry</span>
<div style="position:absolute;left:1266.6px;top:497.6px;width:1.0px;height:24.6px;background:#f2f2f5"></div>
<span class="t m2" style="left:1274.0px;top:500.1px;font-size:12.5px;letter-spacing:-0.146px;color:#62626b;">May 9 - May 16</span>
<svg style="position:absolute;left:1556.0px;top:503.7px" width="12" height="12"><use href="#i-hou"/></svg>
<span class="t m2" style="left:1601.0px;top:500.1px;font-size:12.5px;letter-spacing:-0.093px;color:#62626b;">Jul 10</span>
<div style="position:absolute;left:371.0px;top:532.9px;width:1276.0px;height:1.0px;background:#f6f6f8"></div>
<svg style="position:absolute;left:382.7px;top:547.9px" width="14.6" height="14.6"><use href="#i-ok"/></svg>
<div style="position:absolute;left:406.4px;top:545.8px;width:18.8px;height:18.8px;border-radius:50%;background:#1c1c1f"></div>
<span class="t" style="left:413.2px;top:545.4px;font-size:6px;font-weight:700;color:#e8e8ec;">H</span>
<span class="t m2" style="left:431.7px;top:545.4px;font-size:13px;letter-spacing:-0.176px;color:#76767f;">Harry</span>
<svg style="position:absolute;left:539.8px;top:547.6px;opacity:.85" width="14" height="14"><use href="#i-fea"/></svg>
<span class="t m2" style="left:562.6px;top:545.3px;font-size:13px;letter-spacing:-0.259px;color:#5a5a63;">Hey there! Your place looks great. Do you …</span>
<span class="t" style="left:818.0px;top:545.3px;font-size:12.5px;letter-spacing:-0.078px;color:#9e9ea8;">Hey there! Let me check on the WiFi for …</span>
<div style="position:absolute;left:1368.8px;top:541.9px;width:176.6px;height:26.6px;border-radius:14px;border:1px solid #f0f0f3"></div>
<svg style="position:absolute;left:1377.0px;top:548.8px" width="13" height="12.5"><use href="#i-home"/></svg>
<span class="t m2" style="left:1395.5px;top:545.4px;font-size:12.5px;letter-spacing:0.054px;color:#62626b;">Pampa Place Tiny Home</span>
<div style="position:absolute;left:1207.4px;top:541.9px;width:154.1px;height:26.6px;border-radius:14px;border:1px solid #f0f0f3"></div>
<div style="position:absolute;left:1216.7px;top:551.8px;width:7.0px;height:7.0px;border-radius:50%;background:#b888d8"></div>
<span class="t m2" style="left:1228.0px;top:545.4px;font-size:12.5px;letter-spacing:0.167px;color:#62626b;">Inquiry</span>
<div style="position:absolute;left:1273.7px;top:542.9px;width:1.0px;height:24.6px;background:#f2f2f5"></div>
<span class="t m2" style="left:1281.1px;top:545.4px;font-size:12.5px;letter-spacing:0.298px;color:#62626b;">Jul 8 - Jul 9</span>
<svg style="position:absolute;left:1554.2px;top:546.6px" width="16" height="17"><use href="#i-abnb"/></svg>
<span class="t m2" style="left:1595.5px;top:545.4px;font-size:12.5px;letter-spacing:0.128px;color:#62626b;">Jun 25</span>
<div style="position:absolute;left:371.0px;top:578.2px;width:1276.0px;height:1.0px;background:#f6f6f8"></div>
<svg style="position:absolute;left:382.7px;top:593.2px" width="14.6" height="14.6"><use href="#i-al"/></svg>
<div style="position:absolute;left:406.4px;top:591.1px;width:18.8px;height:18.8px;border-radius:50%;background:#f3f3f6"></div>
<span class="t" style="left:409.6px;top:590.8px;font-size:9px;letter-spacing:-0.500px;font-weight:700;color:#74747e;">PM</span>
<span class="t m2" style="left:431.7px;top:590.7px;font-size:13px;letter-spacing:-0.094px;color:#76767f;">Peter Malik</span>
<svg style="position:absolute;left:539.8px;top:592.9px;opacity:.85" width="14" height="14"><use href="#i-fea"/></svg>
<span class="t m2" style="left:562.6px;top:590.6px;font-size:13px;letter-spacing:-0.014px;color:#5a5a63;">New conversation</span>
<span class="t" style="left:674.7px;top:590.6px;font-size:12.5px;letter-spacing:0.013px;color:#9e9ea8;">REALTIME 5: this is a test message inserted directly via Supabas…</span>
<div style="position:absolute;left:1378.0px;top:587.2px;width:167.4px;height:26.6px;border-radius:14px;border:1px solid #f0f0f3"></div>
<svg style="position:absolute;left:1386.0px;top:594.1px" width="13" height="12.5"><use href="#i-cab"/></svg>
<span class="t m2" style="left:1404.6px;top:590.7px;font-size:12.5px;letter-spacing:0.079px;color:#62626b;">Log Cabin on the River</span>
<div style="position:absolute;left:1192.7px;top:587.2px;width:178.0px;height:26.6px;border-radius:14px;border:1px solid #f0f0f3"></div>
<div style="position:absolute;left:1202.0px;top:597.1px;width:7.0px;height:7.0px;border-radius:50%;background:#b888d8"></div>
<span class="t m2" style="left:1213.3px;top:590.7px;font-size:12.5px;letter-spacing:0.167px;color:#62626b;">Inquiry</span>
<div style="position:absolute;left:1259.0px;top:588.2px;width:1.0px;height:24.6px;background:#f2f2f5"></div>
<span class="t m2" style="left:1266.4px;top:590.7px;font-size:12.5px;letter-spacing:0.136px;color:#62626b;">Aug 29 - Aug 30</span>
<svg style="position:absolute;left:1556.0px;top:594.3px" width="12" height="12"><use href="#i-hou"/></svg>
<span class="t m2" style="left:1598.5px;top:590.7px;font-size:12.5px;letter-spacing:-0.372px;color:#62626b;">Jun 19</span>
<div style="position:absolute;left:371.0px;top:623.5px;width:1276.0px;height:1.0px;background:#f6f6f8"></div>
<svg style="position:absolute;left:382.7px;top:638.5px" width="14.6" height="14.6"><use href="#i-al"/></svg>
<div style="position:absolute;left:406.4px;top:636.4px;width:18.8px;height:18.8px;border-radius:50%;background:#1c1c1f"></div>
<span class="t" style="left:413.2px;top:636.0px;font-size:6px;font-weight:700;color:#e8e8ec;">H</span>
<span class="t m2" style="left:431.7px;top:636.0px;font-size:13px;letter-spacing:-0.176px;color:#76767f;">Harry</span>
<svg style="position:absolute;left:539.8px;top:638.2px;opacity:.85" width="14" height="14"><use href="#i-fea"/></svg>
<span class="t m2" style="left:562.6px;top:635.9px;font-size:13px;letter-spacing:0.072px;color:#5a5a63;">Availability check for July 1-3</span>
<span class="t" style="left:740.8px;top:635.9px;font-size:12.5px;letter-spacing:0.006px;color:#9e9ea8;">For the record, the HTML to Plain Text conversion tha…</span>
<div style="position:absolute;left:1368.8px;top:632.5px;width:176.6px;height:26.6px;border-radius:14px;border:1px solid #f0f0f3"></div>
<svg style="position:absolute;left:1377.0px;top:639.4px" width="13" height="12.5"><use href="#i-home"/></svg>
<span class="t m2" style="left:1395.5px;top:636.0px;font-size:12.5px;letter-spacing:0.054px;color:#62626b;">Pampa Place Tiny Home</span>
<div style="position:absolute;left:1201.3px;top:632.5px;width:160.2px;height:26.6px;border-radius:14px;border:1px solid #f0f0f3"></div>
<div style="position:absolute;left:1210.6px;top:642.4px;width:7.0px;height:7.0px;border-radius:50%;background:#b888d8"></div>
<span class="t m2" style="left:1221.9px;top:636.0px;font-size:12.5px;letter-spacing:0.167px;color:#62626b;">Inquiry</span>
<div style="position:absolute;left:1267.6px;top:633.5px;width:1.0px;height:24.6px;background:#f2f2f5"></div>
<span class="t m2" style="left:1275.0px;top:636.0px;font-size:12.5px;letter-spacing:-0.194px;color:#62626b;">Nov 1 - Nov 4</span>
<svg style="position:absolute;left:1554.2px;top:637.2px" width="16" height="17"><use href="#i-abnb"/></svg>
<span class="t m2" style="left:1598.5px;top:636.0px;font-size:12.5px;letter-spacing:-0.372px;color:#62626b;">Jun 18</span>
<div style="position:absolute;left:371.0px;top:668.8px;width:1276.0px;height:1.0px;background:#f6f6f8"></div>
<svg style="position:absolute;left:382.7px;top:683.8px" width="14.6" height="14.6"><use href="#i-ok"/></svg>
<div style="position:absolute;left:406.4px;top:681.7px;width:18.8px;height:18.8px;border-radius:50%;background:#1c1c1f"></div>
<span class="t" style="left:413.2px;top:681.3px;font-size:6px;font-weight:700;color:#e8e8ec;">H</span>
<span class="t m2" style="left:431.7px;top:681.3px;font-size:13px;letter-spacing:-0.176px;color:#76767f;">Harry</span>
<svg style="position:absolute;left:539.8px;top:683.5px;opacity:.85" width="14" height="14"><use href="#i-fea"/></svg>
<span class="t m2" style="left:562.6px;top:681.2px;font-size:13px;letter-spacing:-0.087px;color:#5a5a63;">Error processing response</span>
<span class="t" style="left:722.5px;top:681.2px;font-size:12.5px;letter-spacing:0.024px;color:#9e9ea8;">How many guests?</span>
<div style="position:absolute;left:1368.8px;top:677.8px;width:176.6px;height:26.6px;border-radius:14px;border:1px solid #f0f0f3"></div>
<svg style="position:absolute;left:1377.0px;top:684.7px" width="13" height="12.5"><use href="#i-home"/></svg>
<span class="t m2" style="left:1395.5px;top:681.3px;font-size:12.5px;letter-spacing:0.054px;color:#62626b;">Pampa Place Tiny Home</span>
<div style="position:absolute;left:1123.8px;top:677.8px;width:237.7px;height:26.6px;border-radius:14px;border:1px solid #f0f0f3"></div>
<div style="position:absolute;left:1133.1px;top:687.7px;width:7.0px;height:7.0px;border-radius:50%;background:#9a8fd8"></div>
<span class="t m2" style="left:1144.4px;top:681.3px;font-size:12.5px;letter-spacing:0.143px;color:#62626b;">Preapproved inquiry</span>
<div style="position:absolute;left:1266.0px;top:678.8px;width:1.0px;height:24.6px;background:#f2f2f5"></div>
<span class="t m2" style="left:1273.4px;top:681.3px;font-size:12.5px;letter-spacing:-0.094px;color:#62626b;">Jul 10 - Jul 11</span>
<svg style="position:absolute;left:1554.2px;top:682.5px" width="16" height="17"><use href="#i-abnb"/></svg>
<span class="t m2" style="left:1591.5px;top:681.3px;font-size:12.5px;letter-spacing:0.217px;color:#62626b;">May 30</span>
<div style="position:absolute;left:371.0px;top:714.1px;width:1276.0px;height:1.0px;background:#f6f6f8"></div>
<svg style="position:absolute;left:382.7px;top:729.1px" width="14.6" height="14.6"><use href="#i-ok"/></svg>
<div style="position:absolute;left:406.4px;top:727.0px;width:18.8px;height:18.8px;border-radius:50%;background:#1c1c1f"></div>
<span class="t" style="left:413.2px;top:726.6px;font-size:6px;font-weight:700;color:#e8e8ec;">H</span>
<span class="t m2" style="left:431.7px;top:726.6px;font-size:13px;letter-spacing:-0.176px;color:#76767f;">Harry</span>
<svg style="position:absolute;left:539.8px;top:728.8px;opacity:.85" width="14" height="14"><use href="#i-fea"/></svg>
<span class="t m2" style="left:562.6px;top:726.5px;font-size:13px;letter-spacing:0.071px;color:#5a5a63;">Parking availability</span>
<span class="t" style="left:680.4px;top:726.5px;font-size:12.5px;letter-spacing:-0.012px;color:#9e9ea8;">Hey Harry, Yes, we do have free parking at the property! There's …</span>
<div style="position:absolute;left:1368.8px;top:723.1px;width:176.6px;height:26.6px;border-radius:14px;border:1px solid #f0f0f3"></div>
<svg style="position:absolute;left:1377.0px;top:730.0px" width="13" height="12.5"><use href="#i-home"/></svg>
<span class="t m2" style="left:1395.5px;top:726.6px;font-size:12.5px;letter-spacing:0.054px;color:#62626b;">Pampa Place Tiny Home</span>
<div style="position:absolute;left:1185.0px;top:723.1px;width:176.5px;height:26.6px;border-radius:14px;border:1px solid #f0f0f3"></div>
<div style="position:absolute;left:1194.3px;top:733.0px;width:7.0px;height:7.0px;border-radius:50%;background:#ac8cc4"></div>
<span class="t m2" style="left:1205.6px;top:726.6px;font-size:12.5px;letter-spacing:0.167px;color:#62626b;">Inquiry</span>
<div style="position:absolute;left:1251.3px;top:724.1px;width:1.0px;height:24.6px;background:#f2f2f5"></div>
<span class="t m2" style="left:1258.7px;top:726.6px;font-size:12.5px;letter-spacing:0.269px;color:#62626b;">Jun 25 - Jun 26</span>
<svg style="position:absolute;left:1554.2px;top:727.8px" width="16" height="17"><use href="#i-abnb"/></svg>
<span class="t m2" style="left:1593.0px;top:726.6px;font-size:12.5px;letter-spacing:-0.033px;color:#62626b;">May 23</span>
<div style="position:absolute;left:371.0px;top:759.4px;width:1276.0px;height:1.0px;background:#f6f6f8"></div>
<svg style="position:absolute;left:382.7px;top:774.4px" width="14.6" height="14.6"><use href="#i-al"/></svg>
<div style="position:absolute;left:406.4px;top:772.3px;width:18.8px;height:18.8px;border-radius:50%;background:#1c1c1f"></div>
<span class="t" style="left:413.2px;top:771.9px;font-size:6px;font-weight:700;color:#e8e8ec;">H</span>
<span class="t m2" style="left:431.7px;top:771.9px;font-size:13px;letter-spacing:-0.176px;color:#76767f;">Harry</span>
<svg style="position:absolute;left:539.8px;top:774.1px;opacity:.85" width="14" height="14"><use href="#i-fea"/></svg>
<span class="t m2" style="left:562.6px;top:771.8px;font-size:13px;color:#5a5a63;">Pet policy inquiry</span>
<span class="t" style="left:669.9px;top:771.8px;font-size:12.5px;letter-spacing:0.091px;color:#9e9ea8;">Hey do you guys allow pets? Just want to double-check before I c…</span>
<div style="position:absolute;left:1368.8px;top:768.4px;width:176.6px;height:26.6px;border-radius:14px;border:1px solid #f0f0f3"></div>
<svg style="position:absolute;left:1377.0px;top:775.3px" width="13" height="12.5"><use href="#i-home"/></svg>
<span class="t m2" style="left:1395.5px;top:771.9px;font-size:12.5px;letter-spacing:0.054px;color:#62626b;">Pampa Place Tiny Home</span>
<div style="position:absolute;left:1190.2px;top:768.4px;width:171.3px;height:26.6px;border-radius:14px;border:1px solid #f0f0f3"></div>
<div style="position:absolute;left:1199.5px;top:778.3px;width:7.0px;height:7.0px;border-radius:50%;background:#ac8cc4"></div>
<span class="t m2" style="left:1210.8px;top:771.9px;font-size:12.5px;letter-spacing:0.167px;color:#62626b;">Inquiry</span>
<div style="position:absolute;left:1256.5px;top:769.4px;width:1.0px;height:24.6px;background:#f2f2f5"></div>
<span class="t m2" style="left:1263.9px;top:771.9px;font-size:12.5px;letter-spacing:-0.078px;color:#62626b;">Jun 13 - Jun 14</span>
<svg style="position:absolute;left:1554.2px;top:773.1px" width="16" height="17"><use href="#i-abnb"/></svg>
<span class="t m2" style="left:1595.5px;top:771.9px;font-size:12.5px;letter-spacing:-0.450px;color:#62626b;">May 16</span>
<div style="position:absolute;left:371.0px;top:804.7px;width:1276.0px;height:1.0px;background:#f6f6f8"></div>
<svg style="position:absolute;left:382.7px;top:819.7px" width="14.6" height="14.6"><use href="#i-ok"/></svg>
<div style="position:absolute;left:406.4px;top:817.6px;width:18.8px;height:18.8px;border-radius:50%;background:#f3f3f6"></div>
<span class="t" style="left:409.6px;top:817.3px;font-size:9px;letter-spacing:0.250px;font-weight:700;color:#74747e;">UL</span>
<span class="t m2" style="left:431.7px;top:817.2px;font-size:13px;letter-spacing:-0.050px;color:#76767f;">Upsollen Lotsa</span>
<svg style="position:absolute;left:539.8px;top:819.4px;opacity:.85" width="14" height="14"><use href="#i-fea"/></svg>
<span class="t m2" style="left:562.6px;top:817.1px;font-size:13px;letter-spacing:-0.014px;color:#5a5a63;">New conversation</span>
<span class="t" style="left:674.7px;top:817.1px;font-size:12.5px;letter-spacing:-0.005px;color:#9e9ea8;">Welcome!</span>
<div style="position:absolute;left:1381.0px;top:813.7px;width:164.4px;height:26.6px;border-radius:14px;border:1px solid #f0f0f3"></div>
<svg style="position:absolute;left:1391.0px;top:820.6px" width="13" height="12.5"><use href="#i-home"/></svg>
<span class="t m2" style="left:1408.6px;top:817.2px;font-size:12.5px;letter-spacing:0.269px;color:#62626b;">Cortado Stanton Park</span>
<div style="position:absolute;left:1221.8px;top:813.7px;width:151.9px;height:26.6px;border-radius:14px;border:1px solid #f0f0f3"></div>
<div style="position:absolute;left:1231.1px;top:823.6px;width:7.0px;height:7.0px;border-radius:50%;background:#a9a9b2"></div>
<span class="t m2" style="left:1242.4px;top:817.2px;font-size:12.5px;letter-spacing:0.246px;color:#62626b;">Past</span>
<div style="position:absolute;left:1275.4px;top:814.7px;width:1.0px;height:24.6px;background:#f2f2f5"></div>
<span class="t m2" style="left:1282.8px;top:817.2px;font-size:12.5px;letter-spacing:-0.068px;color:#62626b;">May 8 - May 9</span>
<svg style="position:absolute;left:1556.0px;top:820.8px" width="12" height="12"><use href="#i-hou"/></svg>
<span class="t m2" style="left:1591.5px;top:817.2px;font-size:12.5px;letter-spacing:0.217px;color:#62626b;">May 06</span>
<div style="position:absolute;left:371.0px;top:850.0px;width:1276.0px;height:1.0px;background:#f6f6f8"></div>
<svg style="position:absolute;left:382.7px;top:865.0px" width="14.6" height="14.6"><use href="#i-ok"/></svg>
<div style="position:absolute;left:406.4px;top:862.9px;width:18.8px;height:18.8px;border-radius:50%;background:#f3f3f6"></div>
<span class="t" style="left:409.6px;top:862.6px;font-size:9px;letter-spacing:0.250px;font-weight:700;color:#74747e;">UL</span>
<span class="t m2" style="left:431.7px;top:862.5px;font-size:13px;letter-spacing:-0.058px;color:#76767f;">Upsol Leften</span>
<svg style="position:absolute;left:539.8px;top:864.7px;opacity:.85" width="14" height="14"><use href="#i-fea"/></svg>
<span class="t m2" style="left:562.6px;top:862.4px;font-size:13px;letter-spacing:0.124px;color:#5a5a63;">Location of listing</span>
<span class="t" style="left:674.7px;top:862.4px;font-size:12.5px;letter-spacing:0.024px;color:#9e9ea8;">Sorry about that! The listing is located in Stanardsville, VA. Thank…</span>
<div style="position:absolute;left:1378.0px;top:859.0px;width:167.4px;height:26.6px;border-radius:14px;border:1px solid #f0f0f3"></div>
<svg style="position:absolute;left:1386.0px;top:865.9px" width="13" height="12.5"><use href="#i-cab"/></svg>
<span class="t m2" style="left:1404.6px;top:862.5px;font-size:12.5px;letter-spacing:0.079px;color:#62626b;">Log Cabin on the River</span>
<div style="position:absolute;left:1224.0px;top:859.0px;width:146.7px;height:26.6px;border-radius:14px;border:1px solid #f0f0f3"></div>
<div style="position:absolute;left:1233.3px;top:868.9px;width:7.0px;height:7.0px;border-radius:50%;background:#a9a9b2"></div>
<span class="t m2" style="left:1244.6px;top:862.5px;font-size:12.5px;letter-spacing:0.246px;color:#62626b;">Past</span>
<div style="position:absolute;left:1277.6px;top:860.0px;width:1.0px;height:24.6px;background:#f2f2f5"></div>
<span class="t m2" style="left:1285.0px;top:862.5px;font-size:12.5px;letter-spacing:-0.150px;color:#62626b;">Feb 3 - Feb 5</span>
<svg style="position:absolute;left:1556.0px;top:866.1px" width="12" height="12"><use href="#i-hou"/></svg>
<span class="t m2" style="left:1594.5px;top:862.5px;font-size:12.5px;letter-spacing:-0.283px;color:#62626b;">May 01</span>
<div style="position:absolute;left:371.0px;top:895.3px;width:1276.0px;height:1.0px;background:#f6f6f8"></div>
<svg style="position:absolute;left:382.7px;top:910.3px" width="14.6" height="14.6"><use href="#i-ok"/></svg>
<div style="position:absolute;left:406.4px;top:908.2px;width:18.8px;height:18.8px;border-radius:50%;background:#f3f3f6"></div>
<span class="t" style="left:410.6px;top:907.9px;font-size:9px;letter-spacing:-0.250px;font-weight:700;color:#74747e;">TT</span>
<span class="t m2" style="left:431.7px;top:907.8px;font-size:13px;letter-spacing:0.465px;color:#76767f;">test000 test</span>
<svg style="position:absolute;left:539.8px;top:910.0px;opacity:.85" width="14" height="14"><use href="#i-fea"/></svg>
<span class="t m2" style="left:562.6px;top:907.7px;font-size:13px;letter-spacing:-0.014px;color:#5a5a63;">New conversation</span>
<div style="position:absolute;left:1378.0px;top:904.3px;width:167.4px;height:26.6px;border-radius:14px;border:1px solid #f0f0f3"></div>
<svg style="position:absolute;left:1386.0px;top:911.2px" width="13" height="12.5"><use href="#i-cab"/></svg>
<span class="t m2" style="left:1404.6px;top:907.8px;font-size:12.5px;letter-spacing:0.079px;color:#62626b;">Log Cabin on the River</span>
<div style="position:absolute;left:1216.6px;top:904.3px;width:154.1px;height:26.6px;border-radius:14px;border:1px solid #f0f0f3"></div>
<div style="position:absolute;left:1225.9px;top:914.2px;width:7.0px;height:7.0px;border-radius:50%;background:#b888d8"></div>
<span class="t m2" style="left:1237.2px;top:907.8px;font-size:12.5px;letter-spacing:0.167px;color:#62626b;">Inquiry</span>
<div style="position:absolute;left:1282.9px;top:905.3px;width:1.0px;height:24.6px;background:#f2f2f5"></div>
<span class="t m2" style="left:1290.3px;top:907.8px;font-size:12.5px;letter-spacing:0.298px;color:#62626b;">Jul 4 - Jul 5</span>
<svg style="position:absolute;left:1556.0px;top:911.4px" width="12" height="12"><use href="#i-hou"/></svg>
<span class="t m2" style="left:1594.5px;top:907.8px;font-size:12.5px;letter-spacing:-0.283px;color:#62626b;">May 01</span>
<svg style="position:absolute;left:840px;top:345px" width="70" height="85" viewBox="840 345 70 85"><defs><filter id="cs" x="-40%" y="-40%" width="180%" height="180%"><feGaussianBlur stdDeviation="2.2"/></filter></defs><polygon points="857.1,358.8 857.1,397.1 865.8,389.2 874.2,408.8 880.8,405.8 872.7,387 885,386.8" transform="translate(1.5,5)" fill="#000" opacity=".45" filter="url(#cs)"/><polygon points="857.1,358.8 857.1,397.1 865.8,389.2 874.2,408.8 880.8,405.8 872.7,387 885,386.8" fill="#000" stroke="#fff" stroke-width="4.6" stroke-linejoin="miter" stroke-miterlimit="6"/><polygon points="857.1,358.8 857.1,397.1 865.8,389.2 874.2,408.8 880.8,405.8 872.7,387 885,386.8" fill="#000"/></svg>
</div>
</body></html>
